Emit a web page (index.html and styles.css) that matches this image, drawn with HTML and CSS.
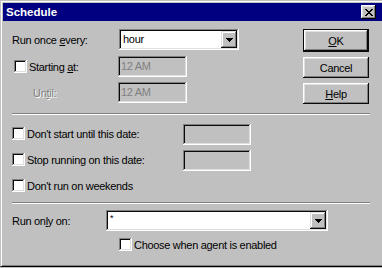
FILE: index.html
```html
<!DOCTYPE html>
<html>
<head>
<meta charset="utf-8">
<title>Schedule</title>
<link rel="stylesheet" href="styles.css">
</head>
<body>
<div class="window">
  <div class="titlebar">
    <span class="title">Schedule</span>
    <span class="close"><svg width="8" height="7" viewBox="0 0 8 7" shape-rendering="crispEdges"><path d="M0 0h2v1H0z M6 0h2v1H6z M1 1h2v1H1z M5 1h2v1H5z M2 2h4v1H2z M3 3h2v1H3z M2 4h4v1H2z M1 5h2v1H1z M5 5h2v1H5z M0 6h2v1H0z M6 6h2v1H6z" fill="#000"/></svg></span>
  </div>

  <div class="top">
    <div class="form">
      <div class="frow fr1">
        <span class="flabel">Run once <u>e</u>very:</span>
        <div class="combo combo-hour"><span class="val">hour</span><span class="dd"><svg width="7" height="4" viewBox="0 0 7 4" shape-rendering="crispEdges"><path d="M0 0h7v1H0z M1 1h5v1H1z M2 2h3v1H2z M3 3h1v1H3z" fill="#000"/></svg></span></div>
      </div>
      <div class="frow fr2">
        <span class="flabel cgroup indent"><span class="check"></span><span class="ctext">Starting <u>a</u>t:</span></span>
        <div class="edit dis time">12 AM</div>
      </div>
      <div class="frow fr3">
        <span class="flabel until">Un<u>t</u>il:</span>
        <div class="edit dis time">12 AM</div>
      </div>
    </div>
    <div class="buttons">
      <button class="btn default"><u>O</u>K</button>
      <button class="btn">Cancel</button>
      <button class="btn"><u>H</u>elp</button>
    </div>
  </div>

  <div class="sep"></div>

  <div class="mid">
    <div class="mrow">
      <span class="mlabel cgroup"><span class="check"></span><span class="ctext">Don't start until this date:</span></span>
      <div class="edit dis date"></div>
    </div>
    <div class="mrow">
      <span class="mlabel cgroup"><span class="check"></span><span class="ctext">Stop running on this date:</span></span>
      <div class="edit dis date"></div>
    </div>
    <div class="mrow">
      <span class="mlabel cgroup"><span class="check"></span><span class="ctext">Don't run on weekends</span></span>
    </div>
  </div>

  <div class="sep"></div>

  <div class="bottom">
    <div class="brow">
      <span class="blabel">Run on<u>l</u>y on:</span>
      <div class="combo combo-only"><span class="val star">*</span><span class="dd"><svg width="7" height="4" viewBox="0 0 7 4" shape-rendering="crispEdges"><path d="M0 0h7v1H0z M1 1h5v1H1z M2 2h3v1H2z M3 3h1v1H3z" fill="#000"/></svg></span></div>
    </div>
    <div class="agent cgroup"><span class="check"></span><span class="ctext">Choose when agent is enabled</span></div>
  </div>
</div>
</body>
</html>
```

FILE: styles.css
```css
html, body {
  margin: 0;
  padding: 0;
  background: #c0c0c0;
  overflow: hidden;
}

body {
  font-family: "Liberation Sans", Arial, sans-serif;
  font-size: 11px;
  letter-spacing: -0.3px;
  color: #000;
}

u {
  text-decoration: underline;
  text-underline-offset: 1px;
}

.window {
  box-sizing: border-box;
  width: 382px;
  height: 267px;
  background: #c0c0c0;
  border-left: 1px solid #c0c0c0;
  border-top: 1px solid #c0c0c0;
  border-bottom: 1px solid #000;
  box-shadow: inset 1px 1px #fff, inset 0 -1px #808080;
  padding: 2px 0 2px 2px;
}

.titlebar {
  height: 18px;
  background: #000080;
  display: flex;
  align-items: center;
}

.title {
  color: #fff;
  font-weight: bold;
  font-size: 11.5px;
  letter-spacing: 0;
  margin-left: 3px;
  flex: 1;
}

.close {
  box-sizing: border-box;
  width: 15px;
  height: 14px;
  margin-right: 6px;
  background: #c0c0c0;
  box-shadow: inset -1px -1px #000, inset 1px 1px #fff, inset -2px -2px #808080, inset 2px 2px #dfdfdf;
  display: flex;
  align-items: center;
  justify-content: center;
  padding-left: 1px;
}

.close svg { display: block; }

/* top section */
.top {
  box-sizing: border-box;
  height: 92px;
  padding: 8px 13px 0 9px;
  display: flex;
}

.form {
  display: flex;
  flex-direction: column;
}

.frow {
  display: flex;
  align-items: center;
  height: 21px;
}

.fr1 { margin-bottom: 6px; }
.fr2 { margin-bottom: 5px; }

.flabel {
  width: 106px;
  flex: none;
}

.indent { padding-left: 2px; box-sizing: border-box; }

.until {
  padding-left: 21px;
  box-sizing: border-box;
  color: #808080;
  text-shadow: 1px 1px 0 #fff;
}

.cgroup {
  display: flex;
  align-items: center;
}

.check {
  box-sizing: border-box;
  width: 13px;
  height: 13px;
  flex: none;
  background: #fff;
  box-shadow: inset -1px -1px #fff, inset 1px 1px #808080, inset -2px -2px #dfdfdf, inset 2px 2px #0a0a0a;
}

.ctext { margin-left: 2px; }

.combo {
  box-sizing: border-box;
  height: 21px;
  padding: 2px;
  background: #fff;
  box-shadow: inset -1px -1px #fff, inset 1px 1px #808080, inset -2px -2px #dfdfdf, inset 2px 2px #0a0a0a;
  display: flex;
}

.combo-hour {
  width: 120px;
  margin-left: 1px;
}

.val {
  flex: 1;
  padding-left: 2px;
  line-height: 17px;
}

.star {
  font-size: 9px;
  line-height: 12px;
  padding-left: 2px;
}

.dd {
  box-sizing: border-box;
  width: 16px;
  height: 17px;
  background: #c0c0c0;
  box-shadow: inset -1px -1px #0a0a0a, inset 1px 1px #dfdfdf, inset -2px -2px #808080, inset 2px 2px #fff;
  display: flex;
  align-items: center;
  justify-content: center;
}

.dd svg { display: block; }

.edit {
  box-sizing: border-box;
  height: 21px;
  padding: 0 3px;
  box-shadow: inset -1px -1px #fff, inset 1px 1px #808080, inset -2px -2px #dfdfdf, inset 2px 2px #0a0a0a;
  line-height: 21px;
}

.dis {
  background: #c0c0c0;
  color: #808080;
}

.time { width: 69px; }

.date { width: 68px; }

.buttons {
  margin-left: auto;
  display: flex;
  flex-direction: column;
  gap: 5px;
}

.btn {
  box-sizing: border-box;
  width: 66px;
  height: 21px;
  padding: 0;
  border: none;
  background: #c0c0c0;
  font-family: inherit;
  font-size: 11px;
  letter-spacing: -0.3px;
  color: #000;
  box-shadow: inset -1px -1px #0a0a0a, inset 1px 1px #fff, inset -2px -2px #808080, inset 2px 2px #dfdfdf;
}

.btn.default {
  height: 23px;
  box-shadow: inset -2px -2px #0a0a0a, inset 1px 1px #0a0a0a, inset 2px 2px #fff, inset -3px -3px #808080, inset 3px 3px #dfdfdf;
}

.sep {
  height: 0;
  margin: 0 12px 0 9px;
  border-top: 1px solid #808080;
  border-bottom: 1px solid #fff;
}

/* middle */
.mid {
  padding: 9px 0 5px 9px;
  display: flex;
  flex-direction: column;
  gap: 5px;
}

.mrow {
  display: flex;
  align-items: flex-start;
  height: 21px;
}

.mlabel {
  width: 171px;
  flex: none;
  margin-top: 3px;
}

/* bottom */
.bottom {
  padding: 6px 0 0 9px;
}

.brow {
  display: flex;
  align-items: center;
}

.blabel {
  width: 94px;
  flex: none;
}

.combo-only { width: 222px; }

.agent {
  margin: 7px 0 0 107px;
}
```
